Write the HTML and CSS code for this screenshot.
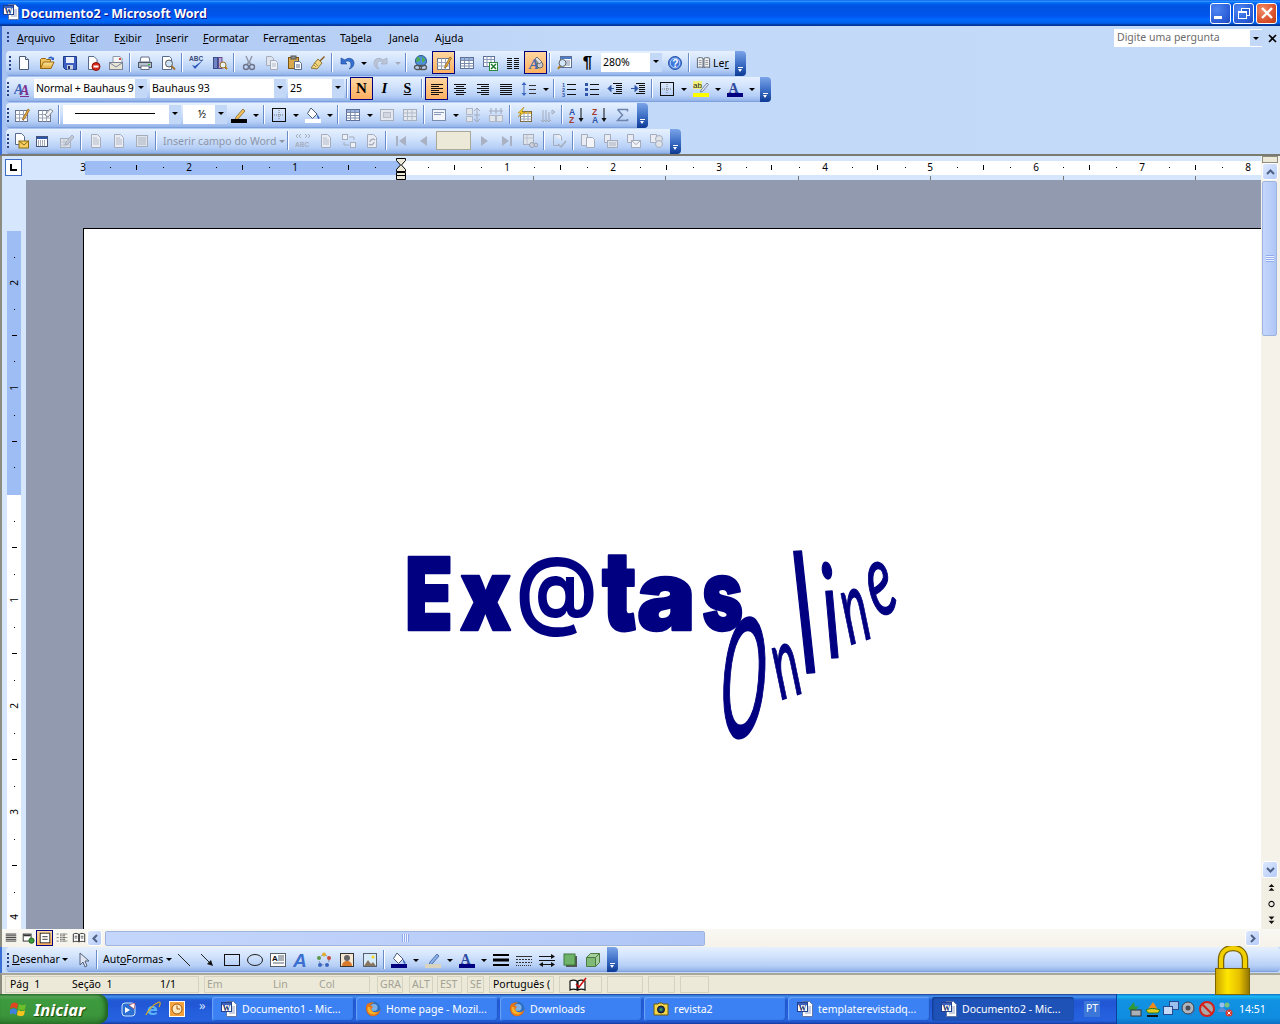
FILE: index.html
```html
<!DOCTYPE html>
<html lang="pt">
<head>
<meta charset="utf-8">
<title>Documento2 - Microsoft Word</title>
<link rel="stylesheet" href="styles.css">
</head>
<body>
<svg class="defs" width="0" height="0" aria-hidden="true">
<defs>
<linearGradient id="gold" x1="0" y1="0" x2="1" y2="0"><stop offset="0" stop-color="#c9a400"/><stop offset=".35" stop-color="#ffe600"/><stop offset=".7" stop-color="#e6c000"/><stop offset="1" stop-color="#8f7400"/></linearGradient>
<linearGradient id="fold" x1="0" y1="0" x2="0" y2="1"><stop offset="0" stop-color="#ffe9a0"/><stop offset="1" stop-color="#e0a93c"/></linearGradient>
<symbol id="new" viewBox="0 0 16 16"><path d="M3.5 1.5h6l3 3v10h-9z" fill="#fff" stroke="#4a5a78"/><path d="M9.5 1.5v3h3" fill="#dfe8f6" stroke="#4a5a78"/></symbol>
<symbol id="open" viewBox="0 0 16 16"><path d="M1.5 13.5v-9l1-1h4l1 1h4v2" fill="#f1c55f" stroke="#96660f"/><path d="M1.5 13.5l3-6.500h10.500l-3 6.500z" fill="url(#fold)" stroke="#96660f"/><path d="M9 3c2-2 4-2 5 0l1-1v3h-3l1-1c-1-1-2-1-3 0" fill="#2f62c8"/></symbol>
<symbol id="save" viewBox="0 0 16 16"><path d="M1.500 1.500h13v13h-11l-2-2z" fill="#3a5fc0" stroke="#1c3a86"/><rect x="4" y="2" width="8" height="6" fill="#e8eefb"/><rect x="5" y="10" width="6" height="4.500" fill="#c8d0e0"/><rect x="6" y="11" width="2" height="3" fill="#203060"/></symbol>
<symbol id="perm" viewBox="0 0 16 16"><path d="M3.500 1.500h5.500l3 3v10h-8.500z" fill="#fff" stroke="#59698a"/><circle cx="11" cy="11.500" r="4" fill="#d82a1c" stroke="#8e1208"/><rect x="8.500" y="10.500" width="5" height="2" fill="#fff"/></symbol>
<symbol id="mailp" viewBox="0 0 16 16"><path d="M5 1.500h7l2 2v6h-9z" fill="#f6f6f6" stroke="#8d98ad"/><rect x="1.500" y="7.500" width="13" height="7" fill="#e9e5d5" stroke="#7a8499"/><path d="M2 8l6 4 6-4" fill="none" stroke="#7a8499"/><rect x="11" y="3" width="2" height="2" fill="#d64a3c"/></symbol>
<symbol id="print" viewBox="0 0 16 16"><path d="M4 2h8l1 5H3z" fill="#fff" stroke="#636f85"/><rect x="1.500" y="7.500" width="13" height="5" fill="#b8c0cc" stroke="#4d5666"/><rect x="4" y="11" width="8" height="3.500" fill="#fff" stroke="#636f85"/><rect x="11" y="9" width="2" height="1" fill="#27c43b"/></symbol>
<symbol id="prev" viewBox="0 0 16 16"><path d="M2.500 1.500h7l2 2v11h-9z" fill="#fff" stroke="#59698a"/><circle cx="9" cy="8.500" r="3.500" fill="#cde4f8" stroke="#5a5a5a"/><path d="M11.500 11l3.500 3.500" stroke="#a0732e" stroke-width="2"/></symbol>
<symbol id="spell" viewBox="0 0 16 16"><text x="0" y="6" font-family="Liberation Sans" font-size="6.500" font-weight="700" fill="#3a4a78">ABC</text><path d="M3 10l3 4 8-9-8 6z" fill="#2b55b8"/></symbol>
<symbol id="research" viewBox="0 0 16 16"><rect x="1.500" y="2.500" width="4" height="11" fill="#6f84c4" stroke="#3b4d88"/><rect x="6.500" y="2.500" width="3.500" height="11" fill="#b9a7d9" stroke="#5d4d88"/><circle cx="11" cy="10" r="3" fill="#e8f2fb" stroke="#9b6b1d"/><path d="M13 12l2 2" stroke="#b27a1a" stroke-width="2"/></symbol>
<symbol id="cut" viewBox="0 0 16 16"><path d="M5 1l3 7 3-7M6 9l2-2 2 2" fill="none" stroke="#8f96a8" stroke-width="1.400"/><circle cx="5" cy="12" r="2.500" fill="none" stroke="#6d748a" stroke-width="1.400"/><circle cx="11" cy="12" r="2.500" fill="none" stroke="#6d748a" stroke-width="1.400"/></symbol>
<symbol id="copy" viewBox="0 0 16 16"><path d="M2.500 1.500h5l2 2v7h-7z" fill="#dfe4ec" stroke="#a5adbd"/><path d="M6.500 5.500h5l2 2v7h-7z" fill="#eef1f6" stroke="#a5adbd"/><path d="M8 9h4M8 11h4" stroke="#b5bccb"/></symbol>
<symbol id="paste" viewBox="0 0 16 16"><rect x="1.500" y="2.500" width="10" height="11" fill="#d8a84a" stroke="#7b5514"/><rect x="4" y="1" width="5" height="3" fill="#8f8f8f" stroke="#555"/><path d="M7.500 6.500h5l2 2v6h-7z" fill="#fff" stroke="#59698a"/><path d="M9 10h4M9 12h4" stroke="#59698a"/></symbol>
<symbol id="brush" viewBox="0 0 16 16"><path d="M9 6l5-5 1 1-5 5z" fill="#8a5a22"/><path d="M8 4l4 4-5 6-6-1c2-2 3-5 7-9z" fill="#efd37f" stroke="#8e7430"/><path d="M5 8l3 3M4 10l2 2" stroke="#a98e3d"/></symbol>
<symbol id="undo" viewBox="0 0 16 16"><path d="M2 3v6h6L6 7c3-2 6-1 6 3 0 2-1 3-2 4 4-1 5-4 5-6 0-5-6-6-9-3z" fill="#3570cf" stroke="#1d4797" stroke-width=".6"/></symbol>
<symbol id="redo" viewBox="0 0 16 16"><path d="M14 3v6H8l2-2C7 5 4 6 4 10c0 2 1 3 2 4-4-1-5-4-5-6 0-5 6-6 9-3z" fill="#bcc6d6" stroke="#9aa5ba" stroke-width=".6"/></symbol>
<symbol id="link" viewBox="0 0 16 16"><circle cx="8" cy="6" r="5.500" fill="#4d8fd8" stroke="#28558e"/><path d="M4 2c2 0 3 1 3 3s-3 1-4 2M9 1c0 2 3 2 3 4s-2 1-3 3" fill="#4cae4c"/><rect x="1.500" y="10.500" width="7" height="4" rx="2" fill="none" stroke="#555" stroke-width="1.300"/><rect x="6.500" y="10.500" width="7" height="4" rx="2" fill="none" stroke="#555" stroke-width="1.300"/></symbol>
<symbol id="tblp" viewBox="0 0 16 16"><rect x="1.500" y="3.500" width="12" height="11" fill="#fff" stroke="#6a7690"/><path d="M1.500 7.500h12M1.500 11h12M5.500 3.500v11M9.500 3.500v11" stroke="#9aa5ba"/><path d="M9 11l5-9 1.500 1-5 9-2 1z" fill="#f0b040" stroke="#8a5a10" stroke-width=".7"/></symbol>
<symbol id="eras" viewBox="0 0 16 16"><rect x="1.500" y="3.500" width="12" height="11" fill="#fff" stroke="#6a7690"/><path d="M1.500 7.500h12M1.500 11h12M5.500 3.500v11M9.500 3.500v11" stroke="#9aa5ba"/><path d="M8 8l5-6 3 2-5 6z" fill="#f0f0f0" stroke="#70788a" stroke-width=".8"/></symbol>
<symbol id="table" viewBox="0 0 16 16"><rect x="1.500" y="2.500" width="13" height="11" fill="#fff" stroke="#5d6f96"/><rect x="2" y="3" width="12" height="2.500" fill="#9db5e0"/><path d="M1.500 5.500h13M1.500 8.500h13M1.500 11h13M5.500 2.500v11M10 2.500v11" stroke="#7b8cad"/></symbol>
<symbol id="excel" viewBox="0 0 16 16"><rect x="1.500" y="1.500" width="11" height="10" fill="#fff" stroke="#5d6f96"/><path d="M1.500 4.500h11M1.500 7.500h11M5 1.500v10M9 1.500v10" stroke="#8a9ab8"/><rect x="7.500" y="7.500" width="8" height="8" fill="#fff" stroke="#2b8a3a"/><path d="M9 9l5 5M14 9l-5 5" stroke="#1f7a2e" stroke-width="1.500"/></symbol>
<symbol id="cols" viewBox="0 0 16 16"><path d="M2 3.500h5M9 3.500h5M2 5.500h5M9 5.500h5M2 7.500h5M9 7.500h5M2 9.500h5M9 9.500h5M2 11.500h5M9 11.500h5M2 13.500h5M9 13.500h5" stroke="#111"/></symbol>
<symbol id="draw" viewBox="0 0 16 16"><text x="1" y="14" font-family="Liberation Serif" font-size="15" font-weight="700" font-style="italic" fill="#4a6ab0">A</text><circle cx="12" cy="10" r="3" fill="#c8c8d0" stroke="#666"/><path d="M9 2l5 5-3 2-4-5z" fill="#dfdfe6" stroke="#777"/></symbol>
<symbol id="map" viewBox="0 0 16 16"><rect x="3.500" y="1.500" width="11" height="11" fill="#fff" stroke="#5d6f96"/><rect x="4" y="2" width="10" height="2" fill="#4d7cc8"/><path d="M9 6h4M9 8h4M9 10h4" stroke="#7b8cad"/><circle cx="5.500" cy="8" r="3.500" fill="#d2e8fa" stroke="#606060"/><path d="M3 11l-2 3" stroke="#b27a1a" stroke-width="2"/></symbol>
<symbol id="help" viewBox="0 0 16 16"><circle cx="8" cy="8" r="6.500" fill="#3f79dd" stroke="#2b55a8"/><circle cx="8" cy="8" r="4.800" fill="none" stroke="#b7d0f7"/><text x="5.300" y="12" font-family="Liberation Sans" font-size="10" font-weight="700" fill="#fff">?</text></symbol>
<symbol id="book" viewBox="0 0 16 16"><path d="M1.500 3.500c2-1 4-1 6 0v10c-2-1-4-1-6 0zM14.500 3.500c-2-1-4-1-6 0v10c2-1 4-1 6 0z" fill="#f2f2f0" stroke="#59606e"/><path d="M3 6h3M3 8h3M3 10h3M10 6h3M10 8h3M10 10h3" stroke="#8c93a0"/></symbol>
<symbol id="style" viewBox="0 0 16 16"><text x="0" y="13" font-family="Liberation Serif" font-size="14" font-weight="700" font-style="italic" fill="#3c61b5">A</text><text x="6" y="14" font-family="Liberation Serif" font-size="14" font-weight="700" font-style="italic" fill="#7e2f8e">A</text><path d="M6 15.500h9" stroke="#7e2f8e"/></symbol>
<symbol id="al" viewBox="0 0 16 16"><path d="M2 3.500h12M2 5.500h8M2 7.500h12M2 9.500h8M2 11.500h12M2 13.500h8" stroke="#111"/></symbol>
<symbol id="ac" viewBox="0 0 16 16"><path d="M2 3.500h12M4 5.500h8M2 7.500h12M4 9.500h8M2 11.500h12M4 13.500h8" stroke="#111"/></symbol>
<symbol id="ar" viewBox="0 0 16 16"><path d="M2 3.500h12M6 5.500h8M2 7.500h12M6 9.500h8M2 11.500h12M6 13.500h8" stroke="#111"/></symbol>
<symbol id="aj" viewBox="0 0 16 16"><path d="M2 3.500h12M2 5.500h12M2 7.500h12M2 9.500h12M2 11.500h12M2 13.500h12" stroke="#111"/></symbol>
<symbol id="lsp" viewBox="0 0 16 16"><path d="M8 4.500h7M8 8.500h7M8 12.500h7" stroke="#333"/><path d="M3 1l2.500 3h-5zM3 15L.5 12h5z" fill="#3a66bf"/><path d="M3 4v8" stroke="#3a66bf"/></symbol>
<symbol id="num" viewBox="0 0 16 16"><text x="1" y="6" font-size="5.500" font-family="Liberation Sans" font-weight="700" fill="#2e55a8">1</text><text x="1" y="11" font-size="5.500" font-family="Liberation Sans" font-weight="700" fill="#2e55a8">2</text><text x="1" y="16" font-size="5.500" font-family="Liberation Sans" font-weight="700" fill="#2e55a8">3</text><path d="M6 3.500h9M6 8.500h9M6 13.500h9" stroke="#111"/></symbol>
<symbol id="bul" viewBox="0 0 16 16"><rect x="1" y="2" width="3" height="3" fill="#2e55a8"/><rect x="1" y="7" width="3" height="3" fill="#2e55a8"/><rect x="1" y="12" width="3" height="3" fill="#2e55a8"/><path d="M6 3.500h9M6 8.500h9M6 13.500h9" stroke="#111"/></symbol>
<symbol id="outd" viewBox="0 0 16 16"><path d="M6 2.500h9M9 4.500h6M9 6.500h6M9 8.500h6M9 10.500h6M6 12.500h9" stroke="#111"/><path d="M7 7.500H3M1 7.500l3-3v6z" fill="#2e55a8" stroke="#2e55a8"/></symbol>
<symbol id="ind" viewBox="0 0 16 16"><path d="M6 2.500h9M9 4.500h6M9 6.500h6M9 8.500h6M9 10.500h6M6 12.500h9" stroke="#111"/><path d="M1 7.500h4M8 7.500l-3-3v6z" fill="#2e55a8" stroke="#2e55a8"/></symbol>
<symbol id="bord" viewBox="0 0 16 16"><rect x="1.500" y="1.500" width="13" height="13" fill="none" stroke="#111"/><path d="M8 3v10M3 8h10" stroke="#777" stroke-dasharray="1 1"/></symbol>
<symbol id="high" viewBox="0 0 16 16"><rect x="0" y="0" width="9" height="8" fill="#f3f27a"/><text x="0" y="7" font-family="Liberation Sans" font-size="8" fill="#222">ab</text><path d="M8 9l6-7 1.500 1.500-6 7-2 .5z" fill="#dfe6f2" stroke="#5b6b88" stroke-width=".8"/><rect x="0" y="12" width="16" height="4" fill="#ff0"/></symbol>
<symbol id="fcol" viewBox="0 0 16 16"><text x="1.500" y="11.500" font-family="Liberation Serif" font-size="14" font-weight="700" fill="#2e4a9e">A</text><rect x="0" y="12" width="16" height="4" fill="#000080"/></symbol>
<symbol id="pen" viewBox="0 0 16 16"><path d="M5 10l7-8 2 2-7 8-3 1z" fill="#f4c15c" stroke="#7e6430" stroke-width=".8"/><rect x="0" y="12" width="16" height="4" fill="#000"/></symbol>
<symbol id="penb" viewBox="0 0 16 16"><path d="M5 10l7-8 2 2-7 8-3 1z" fill="#8bb0e8" stroke="#3a5f9e" stroke-width=".8"/><rect x="0" y="12" width="16" height="4" fill="#d8d4c0"/></symbol>
<symbol id="fill" viewBox="0 0 16 16"><path d="M6 1l6 6-4.500 4.500-5-5z" fill="#fff" stroke="#4a5a78"/><path d="M12 7c1 2 3 3 2.500 4.500S11.500 11 12 7z" fill="#3a66bf"/><rect x="0" y="12" width="16" height="4" fill="#fff"/></symbol>
<symbol id="filln" viewBox="0 0 16 16"><path d="M6 1l6 6-4.500 4.500-5-5z" fill="#fff" stroke="#4a5a78"/><path d="M12 7c1 2 3 3 2.500 4.500S11.500 11 12 7z" fill="#3a66bf"/><rect x="0" y="12" width="16" height="4" fill="#000080"/></symbol>
<symbol id="merge" viewBox="0 0 16 16"><rect x="1.500" y="2.500" width="13" height="11" fill="#e4e8ef" stroke="#a7afbf"/><rect x="4.500" y="5.500" width="7" height="5" fill="#d2d7e0" stroke="#b6bcc9"/></symbol>
<symbol id="split" viewBox="0 0 16 16"><rect x="1.500" y="2.500" width="13" height="11" fill="#e4e8ef" stroke="#a7afbf"/><path d="M1.500 6h13M1.500 9.500h13M5.500 2.500v11M10 2.500v11" stroke="#b3bac8"/></symbol>
<symbol id="calign" viewBox="0 0 16 16"><rect x="1.500" y="2.500" width="13" height="11" fill="#f2f5fa" stroke="#7b8cad"/><path d="M3 5.500h10M3 7.500h7" stroke="#8a9ab8"/></symbol>
<symbol id="drow" viewBox="0 0 16 16"><rect x="1.500" y="1.500" width="6" height="6" fill="#e1e5ec" stroke="#b0b7c6"/><rect x="1.500" y="9.500" width="6" height="5" fill="#e1e5ec" stroke="#b0b7c6"/><path d="M12 1v14M9 4l3-3 3 3M9 12l3 3 3-3M9 8h6" fill="none" stroke="#a2aabb"/></symbol>
<symbol id="dcol" viewBox="0 0 16 16"><rect x="1.500" y="8.500" width="6" height="6" fill="#e1e5ec" stroke="#b0b7c6"/><rect x="8.500" y="8.500" width="6" height="6" fill="#e1e5ec" stroke="#b0b7c6"/><path d="M1 4h14M3 1v6M8 1v6M13 1v6" fill="none" stroke="#a2aabb"/></symbol>
<symbol id="auto" viewBox="0 0 16 16"><rect x="3.500" y="4.500" width="11" height="10" fill="#fff" stroke="#7c6a3a"/><rect x="4" y="5" width="10" height="2" fill="#e9b94a"/><path d="M3.500 9.500h11M3.500 12h11M7 4.500v10M11 4.500v10" stroke="#9aa5ba"/><path d="M7 0L1 6h3l-3 4 7-5H5z" fill="#f6cc2a" stroke="#a2781a" stroke-width=".5"/></symbol>
<symbol id="tdir" viewBox="0 0 16 16"><path d="M3 3v11M6 3v11M9 5v9M12 3l3 2-3 2zM1 13l2 2 2-2M4 13l2 2 2-2M7 13l2 2 2-2" fill="none" stroke="#a2aabb"/></symbol>
<symbol id="az" viewBox="0 0 16 16"><text x="0" y="7.500" font-family="Liberation Sans" font-size="8.500" font-weight="700" fill="#2e55a8">A</text><text x="0" y="15.500" font-family="Liberation Sans" font-size="8.500" font-weight="700" fill="#a83a2e">Z</text><path d="M12 1v12" stroke="#111"/><path d="M9.500 11h5L12 15z" fill="#111"/></symbol>
<symbol id="za" viewBox="0 0 16 16"><text x="0" y="7.500" font-family="Liberation Sans" font-size="8.500" font-weight="700" fill="#a83a2e">Z</text><text x="0" y="15.500" font-family="Liberation Sans" font-size="8.500" font-weight="700" fill="#2e55a8">A</text><path d="M12 1v12" stroke="#111"/><path d="M9.500 11h5L12 15z" fill="#111"/></symbol>
<symbol id="sum" viewBox="0 0 16 16"><path d="M2.500 2.500h10v2M12.500 12v1.500h-10l5-5.500-5-5.500" fill="none" stroke="#6d84ad" stroke-width="1.500"/></symbol>
<symbol id="mmain" viewBox="0 0 16 16"><path d="M2.500 .5h6l3 3v8h-9z" fill="#fff" stroke="#59698a"/><rect x="6" y="8" width="9.500" height="7" fill="#f6cf62" stroke="#8b6a14"/><path d="M6 8l5 4 4.500-4" fill="none" stroke="#8b6a14"/></symbol>
<symbol id="cal" viewBox="0 0 16 16"><rect x="2.500" y="3.500" width="11" height="10" fill="#fff" stroke="#46567a"/><rect x="3" y="4" width="10" height="2" fill="#2e55a8"/><path d="M4 8h8M4 10h8M4 12h8" stroke="#46567a" stroke-dasharray="1 1"/></symbol>
<symbol id="medit" viewBox="0 0 16 16"><rect x="1.500" y="5.500" width="10" height="9" fill="#dfe3ea" stroke="#a5adbd"/><path d="M1.500 9h10M1.500 12h10M5 5.500v9" stroke="#bcc3d0"/><path d="M7 9l6-7 2 2-6 7-3 1z" fill="#c5cbd6" stroke="#9aa3b4" stroke-width=".8"/></symbol>
<symbol id="gdoc" viewBox="0 0 16 16"><path d="M3.500 1.500h6l3 3v10h-9z" fill="#e9ecf2" stroke="#a5adbd"/><path d="M5 5h4M5 7h6M5 9h6M5 11h6" stroke="#b5bccb"/></symbol>
<symbol id="gdoc2" viewBox="0 0 16 16"><rect x="2.500" y="2.500" width="11" height="11" fill="#dfe3ea" stroke="#a5adbd"/><path d="M4 5h8M4 7h8M4 9h8M4 11h8" stroke="#aeb5c4"/></symbol>
<symbol id="abc" viewBox="0 0 16 16"><path d="M3 1L1 3l2 2M6 1L4 3l2 2M10 1l2 2-2 2M13 1l2 2-2 2" fill="none" stroke="#a5adbd"/><text x="0" y="14" font-size="6.500" font-weight="700" font-family="Liberation Sans" fill="#a5adbd">ABC</text></symbol>
<symbol id="rules" viewBox="0 0 16 16"><rect x="1.500" y="1.500" width="5" height="5" fill="#eef1f6" stroke="#a5adbd"/><rect x="9.500" y="9.500" width="5" height="5" fill="#eef1f6" stroke="#a5adbd"/><path d="M8 4h5v3M8 12H3V9" fill="none" stroke="#a5adbd"/></symbol>
<symbol id="upd" viewBox="0 0 16 16"><path d="M3.500 1.500h6l3 3v10h-9z" fill="#e9ecf2" stroke="#a5adbd"/><path d="M6 9a3 3 0 015-2M10 9a3 3 0 01-5 2" fill="none" stroke="#a0a8b8" stroke-width="1.300"/></symbol>
<symbol id="first" viewBox="0 0 16 16"><rect x="3" y="3" width="2" height="10" fill="#a9b1c2"/><path d="M13 3v10L6 8z" fill="#a9b1c2"/></symbol>
<symbol id="prevr" viewBox="0 0 16 16"><path d="M11 3v10L4 8z" fill="#a9b1c2"/></symbol>
<symbol id="nextr" viewBox="0 0 16 16"><path d="M5 3v10l7-5z" fill="#a9b1c2"/></symbol>
<symbol id="last" viewBox="0 0 16 16"><path d="M3 3v10l7-5z" fill="#a9b1c2"/><rect x="11" y="3" width="2" height="10" fill="#a9b1c2"/></symbol>
<symbol id="find" viewBox="0 0 16 16"><rect x="1.500" y="1.500" width="10" height="10" fill="#e1e5ec" stroke="#a5adbd"/><path d="M1.500 5h10M5 1.500v10" stroke="#bcc3d0"/><circle cx="10" cy="12" r="2.500" fill="#cbd1dc" stroke="#99a1b2"/><circle cx="14" cy="12" r="1.800" fill="#cbd1dc" stroke="#99a1b2"/></symbol>
<symbol id="chk" viewBox="0 0 16 16"><path d="M2.500 1.500h6l2 2v4" fill="#e9ecf2" stroke="#a5adbd"/><path d="M2.500 1.500v11h5" fill="none" stroke="#a5adbd"/><path d="M7 11l3 3 5-6" fill="none" stroke="#a5adbd" stroke-width="1.500"/></symbol>
<symbol id="m1" viewBox="0 0 16 16"><path d="M1.500 1.500h6v11h-6z" fill="#e9ecf2" stroke="#a5adbd"/><path d="M6.500 4.500h6l2 2v8h-8z" fill="#f2f4f8" stroke="#a5adbd"/></symbol>
<symbol id="m2" viewBox="0 0 16 16"><path d="M1.500 1.500h6v8h-6z" fill="#e9ecf2" stroke="#a5adbd"/><rect x="4.500" y="7.500" width="10" height="7" fill="#dfe3ea" stroke="#a5adbd"/><path d="M6 10h7M6 12h7" stroke="#aeb5c4"/></symbol>
<symbol id="m3" viewBox="0 0 16 16"><path d="M1.500 1.500h6v8h-6z" fill="#e9ecf2" stroke="#a5adbd"/><rect x="5.500" y="7.500" width="9" height="7" fill="#f2f4f8" stroke="#a5adbd"/><path d="M5.500 7.500l4.500 4 4.500-4" fill="none" stroke="#a5adbd"/></symbol>
<symbol id="m4" viewBox="0 0 16 16"><path d="M1.500 1.500h6v8h-6z" fill="#e9ecf2" stroke="#a5adbd"/><circle cx="10" cy="6" r="3.500" fill="#dfe3ea" stroke="#a5adbd"/><circle cx="10" cy="11" r="3.500" fill="#dfe3ea" stroke="#a5adbd"/></symbol>
<symbol id="cursor" viewBox="0 0 16 16"><path d="M5 1v12l3-3 2 5 2-1-2-5h4z" fill="#dfe6f2" stroke="#54607a"/></symbol>
<symbol id="line" viewBox="0 0 16 16"><path d="M2 2l12 12" stroke="#222"/></symbol>
<symbol id="arrow" viewBox="0 0 16 16"><path d="M2 2l10 10" stroke="#222"/><path d="M14 14l-6-2 4-4z" fill="#111"/></symbol>
<symbol id="rect" viewBox="0 0 16 16"><rect x=".5" y="2.500" width="15" height="11" fill="none" stroke="#111"/></symbol>
<symbol id="oval" viewBox="0 0 16 16"><ellipse cx="8" cy="8" rx="7.500" ry="5.500" fill="none" stroke="#222"/></symbol>
<symbol id="tbox" viewBox="0 0 16 16"><rect x=".5" y="1.500" width="15" height="13" fill="#fff" stroke="#59606e"/><text x="2" y="8.500" font-size="8" font-family="Liberation Sans" font-weight="700" fill="#111">A</text><path d="M8 4h6M8 6h6M8 8h6M3 11h11" stroke="#59606e"/></symbol>
<symbol id="wart" viewBox="0 0 16 16"><text x="0" y="15" font-family="Liberation Sans" font-size="19" font-weight="700" font-style="italic" fill="#3b6fd0">A</text></symbol>
<symbol id="diag" viewBox="0 0 16 16"><circle cx="8" cy="8" r="5" fill="none" stroke="#7a8499" stroke-dasharray="2 2"/><circle cx="8" cy="2.500" r="2" fill="#e0b030"/><circle cx="13" cy="6" r="2" fill="#c64a3a"/><circle cx="11" cy="13" r="2" fill="#3a66bf"/><circle cx="4" cy="13" r="2" fill="#3a66bf"/><circle cx="3" cy="6" r="2" fill="#5a9a4a"/></symbol>
<symbol id="clip" viewBox="0 0 16 16"><rect x="1.500" y="1.500" width="13" height="13" fill="#f4e8d0" stroke="#333"/><circle cx="8" cy="6" r="3" fill="#666"/><path d="M3 14c0-4 3-5 5-5s5 1 5 5z" fill="#d9792c"/></symbol>
<symbol id="pict" viewBox="0 0 16 16"><rect x="1.500" y="1.500" width="13" height="13" fill="#d7ecfa" stroke="#59606e"/><path d="M2 14l4-6 3 4 2-2 3 4z" fill="#8a7560"/><circle cx="11" cy="5" r="1.500" fill="#f5d020"/></symbol>
<symbol id="lsty" viewBox="0 0 16 16"><path d="M0 3h16" stroke="#000" stroke-width="2"/><path d="M0 8h16" stroke="#000" stroke-width="3"/><path d="M0 13h16" stroke="#000" stroke-width="2"/></symbol>
<symbol id="dash" viewBox="0 0 16 16"><path d="M0 4.500h16" stroke="#333"/><path d="M0 7.500h16M0 10.500h16" stroke="#333" stroke-dasharray="2 1"/><path d="M0 13.500h16" stroke="#333" stroke-dasharray="1 1"/></symbol>
<symbol id="arrs" viewBox="0 0 16 16"><path d="M0 4.500h13" stroke="#111"/><path d="M16 4.500l-4-2.500v5z" fill="#111"/><path d="M0 8.500h16" stroke="#111"/><path d="M3 12.500h10" stroke="#111"/><path d="M0 12.500l4-2.500v5zM16 12.500l-4-2.500v5z" fill="#111"/></symbol>
<symbol id="shad" viewBox="0 0 16 16"><rect x="4" y="4" width="11" height="11" fill="#555"/><rect x="2" y="2" width="11" height="11" fill="#6fb36a" stroke="#3d7a38"/></symbol>
<symbol id="d3" viewBox="0 0 16 16"><path d="M1.500 5.500l4-4h9v9l-4 4h-9z" fill="#a4d09c" stroke="#4c7a45"/><path d="M1.500 5.500h9v9M10.500 5.500l4-4" fill="none" stroke="#4c7a45"/><rect x="2" y="6" width="8" height="8" fill="#7fbb76"/></symbol>
<symbol id="vn" viewBox="0 0 16 16"><path d="M2 3.500h12M2 5.500h12M2 7.500h12M2 9.500h12M2 11.500h12" stroke="#222"/></symbol>
<symbol id="vw" viewBox="0 0 16 16"><rect x="2.500" y="3.500" width="9" height="8" fill="#fff" stroke="#222"/><rect x="3" y="4" width="8" height="2" fill="#333"/><circle cx="12" cy="11" r="3" fill="#3c9a3c" stroke="#1d5e1d"/></symbol>
<symbol id="vp" viewBox="0 0 16 16"><rect x="2.500" y="2.500" width="11" height="11" fill="#fff" stroke="#222"/><path d="M5 6.500h6M5 9.500h6" stroke="#222"/></symbol>
<symbol id="vo" viewBox="0 0 16 16"><path d="M2 3.500h2M6 3.500h8M2 7.500h2M6 7.500h8M2 11.500h2M6 11.500h8M6 5.500h6M6 9.500h6" stroke="#222" stroke-dasharray="1 .5"/></symbol>
<symbol id="vr" viewBox="0 0 16 16"><path d="M1.500 3.500c2-1 4-1 6 0v9c-2-1-4-1-6 0zM14.500 3.500c-2-1-4-1-6 0v9c2-1 4-1 6 0z" fill="#fff" stroke="#222"/><path d="M3 6h3M10 6h3M3 8h3M10 8h3" stroke="#444"/></symbol>
<symbol id="word" viewBox="0 0 16 16"><path d="M5.500 .5h7l3 3v12h-10z" fill="#fff" stroke="#6276a5"/><path d="M8 6h6M8 8h6M8 10h6M8 12h6" stroke="#8fa0c4"/><rect x=".5" y="1.500" width="10" height="9" fill="#fff" stroke="#23408e"/><rect x="1" y="2" width="9" height="2" fill="#3c62bd"/><text x="1.800" y="9.700" font-family="Liberation Serif" font-size="7.500" font-weight="700" fill="#152a6b">W</text></symbol>
<symbol id="fox" viewBox="0 0 16 16"><circle cx="8" cy="8" r="7.500" fill="#2b6fc0"/><circle cx="9" cy="6.500" r="3.500" fill="#7cb2e8"/><path d="M2 3c-2 4-1 10 4 12 5 1 9-2 9.500-7-1 2-2 3-4 3-3 1-5-1-5-3 0-1 1-2 2-2-2-1-3-1-3-2 1-1 2-2 4-2-3-1-5 0-7.500 1z" fill="#e8741a"/><path d="M3 6c-1 3 0 6 3 7 3 1 5 0 7-2-3 1-6 0-7-2-1-1-1-2-1-3z" fill="#f6b32a"/></symbol>
<symbol id="cam" viewBox="0 0 16 16"><path d="M1 3h4l1-1h3l1 1h5v11H1z" fill="#f3d44a" stroke="#6a5a10"/><circle cx="8" cy="8.500" r="3.500" fill="#1c3f75" stroke="#111"/><circle cx="8" cy="8.500" r="1.500" fill="#3a9a50"/></symbol>
<symbol id="qdesk" viewBox="0 0 16 16"><rect x="1" y="2" width="13" height="13" rx="3" fill="#2c6fd2" stroke="#cfe3fb"/><path d="M4 6l5 3-5 3z" fill="#fff"/><path d="M8 4l6-2-1 6z" fill="#fff" stroke="#c8292b" stroke-width=".5"/></symbol>
<symbol id="ie" viewBox="0 0 16 16"><text x="2" y="14" font-family="DejaVu Sans" font-size="16" font-weight="700" fill="#5ab4f5">e</text><path d="M1 14C3 9 9 3 14 1c2 0 1 3 0 5" fill="none" stroke="#e3a916" stroke-width="1.200"/></symbol>
<symbol id="clock" viewBox="0 0 16 16"><rect x=".5" y=".5" width="15" height="15" fill="#f4a23c" stroke="#fff"/><circle cx="8" cy="8" r="5" fill="#fde9c2" stroke="#a5560b"/><path d="M8 4.500V8h3" fill="none" stroke="#a5560b"/></symbol>
<symbol id="t1" viewBox="0 0 16 16"><path d="M1 8l6-7 1 5 4-1-5 6z" fill="#2f9a35"/><rect x="4" y="9" width="10" height="6" fill="#aab0b8" stroke="#333"/></symbol>
<symbol id="t2" viewBox="0 0 16 16"><path d="M8 1c2 3 4 5 5 9H2c1-3 3-5 6-9z" fill="#f08a1c"/><path d="M1 9c4-2 8-2 14 0l-2 3H3z" fill="#e0cc20" stroke="#1c7a2a"/><path d="M2 15h11" stroke="#111" stroke-width="2"/></symbol>
<symbol id="t3" viewBox="0 0 16 16"><rect x="6.500" y=".5" width="9" height="8" fill="#9cc0ee" stroke="#254a8e"/><rect x=".5" y="5.500" width="9" height="8" fill="#c4daf6" stroke="#254a8e"/></symbol>
<symbol id="t4" viewBox="0 0 16 16"><circle cx="7" cy="7" r="6" fill="#b0b4bc" stroke="#3a3e48"/><circle cx="7" cy="7" r="2.500" fill="#4a4e58"/><path d="M9 15l5-6" stroke="#4a6ab8"/></symbol>
<symbol id="t5" viewBox="0 0 16 16"><circle cx="8" cy="8" r="7" fill="#a9a9a9"/><circle cx="8" cy="8" r="7" fill="none" stroke="#d8201a" stroke-width="2"/><path d="M3 3l10 10" stroke="#d8201a" stroke-width="2"/></symbol>
<symbol id="t6" viewBox="0 0 16 16"><circle cx="5" cy="4" r="2.500" fill="#9cc0ee"/><path d="M1 11c0-3 2-4 4-4s4 1 4 4z" fill="#5e8cd4"/><circle cx="10" cy="4" r="2.500" fill="#7cc07c"/><circle cx="12" cy="12" r="3.500" fill="#d83a30"/><path d="M10.500 10.500l3 3M13.500 10.500l-3 3" stroke="#fff"/></symbol>
<symbol id="winlogo" viewBox="0 0 18 18"><path d="M1 4c3-2 5-2 7 0l-1 5c-2-2-4-2-7 0z" fill="#e0451f"/><path d="M9 4c2 1 4 2 7 0l-1 5c-3 2-5 1-7 0z" fill="#6cbf2b"/><path d="M0 10c3-2 5-2 7 0l-1 5c-2-2-4-2-7 0z" fill="#3f7fe0"/><path d="M8 10c2 1 4 2 7 0l-1 5c-3 2-5 1-7 0z" fill="#f5c41d"/></symbol>
</defs>
</svg>

<div class="app">
  <header class="title">
    <svg class="title-ico"><use href="#word"/></svg>
    <span class="title-text">Documento2 - Microsoft Word</span>
    <span class="wbtn wb-blue"><span class="g-min"></span></span>
    <span class="wbtn wb-blue"><span class="g-max"></span></span>
    <span class="wbtn wb-red"><svg class="g-x" viewBox="0 0 14 14"><path d="M2 2l10 10M12 2L2 12" stroke="#fff" stroke-width="2.400"/></svg></span>
  </header>

  <section class="dock">
    <div class="menu">
      <span class="mgrip"></span>
      <nav class="menu-items">
        <span><u>A</u>rquivo</span><span><u>E</u>ditar</span><span>E<u>x</u>ibir</span><span><u>I</u>nserir</span><span><u>F</u>ormatar</span><span>Ferra<u>m</u>entas</span><span>Ta<u>b</u>ela</span><span><u>J</u>anela</span><span>Aj<u>u</u>da</span>
      </nav>
      <div class="ask"><span class="ask-t">Digite uma pergunta</span><span class="cdrop"></span></div>
      <svg class="mclose" viewBox="0 0 9 9"><path d="M1 1l7 7M8 1L1 8" stroke="#000" stroke-width="1.600"/></svg>
    </div>

    <div class="tb">
      <span class="grip g1"></span>
      <span class="b"><svg><use href="#new"/></svg></span><span class="b"><svg><use href="#open"/></svg></span><span class="b"><svg><use href="#save"/></svg></span><span class="b"><svg><use href="#perm"/></svg></span><span class="b"><svg><use href="#mailp"/></svg></span><i class="sep"></i>
      <span class="b"><svg><use href="#print"/></svg></span><span class="b"><svg><use href="#prev"/></svg></span><i class="sep"></i>
      <span class="b"><svg><use href="#spell"/></svg></span><span class="b"><svg><use href="#research"/></svg></span><i class="sep"></i>
      <span class="b"><svg><use href="#cut"/></svg></span><span class="b"><svg><use href="#copy"/></svg></span><span class="b"><svg><use href="#paste"/></svg></span><span class="b"><svg><use href="#brush"/></svg></span><i class="sep"></i>
      <span class="b"><svg><use href="#undo"/></svg></span><span class="dd"></span><span class="b"><svg><use href="#redo"/></svg></span><span class="dd off"></span><i class="sep"></i>
      <span class="b"><svg><use href="#link"/></svg></span><span class="b on"><svg><use href="#tblp"/></svg></span><span class="b"><svg><use href="#table"/></svg></span><span class="b"><svg><use href="#excel"/></svg></span><span class="b"><svg><use href="#cols"/></svg></span><span class="b on"><svg><use href="#draw"/></svg></span><i class="sep"></i>
      <span class="b"><svg><use href="#map"/></svg></span><span class="b txt-b">¶</span>
      <span class="combo c-zoom"><span>280%</span><span class="cdrop"></span></span>
      <span class="b"><svg><use href="#help"/></svg></span><i class="sep"></i>
      <span class="ler"><svg><use href="#book"/></svg><span>Le<u>r</u></span></span>
      <span class="chev"></span>
    </div>

    <div class="tb">
      <span class="grip"></span>
      <span class="b"><svg><use href="#style"/></svg></span>
      <span class="combo c-style"><span class="tight">Normal + Bauhaus 9</span><span class="cdrop"></span></span>
      <span class="combo c-font"><span>Bauhaus 93</span><span class="cdrop"></span></span>
      <span class="combo c-size"><span>25</span><span class="cdrop"></span></span><i class="sep"></i>
      <span class="b on let-n">N</span><span class="b let-i">I</span><span class="b let-s">S</span><i class="sep"></i>
      <span class="b on"><svg><use href="#al"/></svg></span><span class="b"><svg><use href="#ac"/></svg></span><span class="b"><svg><use href="#ar"/></svg></span><span class="b"><svg><use href="#aj"/></svg></span><span class="b"><svg><use href="#lsp"/></svg></span><span class="dd"></span><i class="sep"></i>
      <span class="b"><svg><use href="#num"/></svg></span><span class="b"><svg><use href="#bul"/></svg></span><span class="b"><svg><use href="#outd"/></svg></span><span class="b"><svg><use href="#ind"/></svg></span><i class="sep"></i>
      <span class="b"><svg><use href="#bord"/></svg></span><span class="dd"></span><span class="b"><svg><use href="#high"/></svg></span><span class="dd"></span><span class="b"><svg><use href="#fcol"/></svg></span><span class="dd"></span>
      <span class="chev ch2"></span>
    </div>

    <div class="tb">
      <span class="grip"></span>
      <span class="b"><svg><use href="#tblp"/></svg></span><span class="b"><svg><use href="#eras"/></svg></span><i class="sep"></i>
      <span class="combo c-line"><span class="lineprev"></span><span class="cdrop"></span></span>
      <span class="combo c-wt"><span class="wt">½</span><span class="cdrop"></span></span>
      <span class="b"><svg><use href="#pen"/></svg></span><span class="dd"></span><i class="sep"></i>
      <span class="b"><svg><use href="#bord"/></svg></span><span class="dd"></span><span class="b"><svg><use href="#fill"/></svg></span><span class="dd"></span><i class="sep"></i>
      <span class="b"><svg><use href="#table"/></svg></span><span class="dd"></span><span class="b"><svg><use href="#merge"/></svg></span><span class="b"><svg><use href="#split"/></svg></span><i class="sep"></i>
      <span class="b"><svg><use href="#calign"/></svg></span><span class="dd"></span><span class="b"><svg><use href="#drow"/></svg></span><span class="b"><svg><use href="#dcol"/></svg></span><i class="sep"></i>
      <span class="b"><svg><use href="#auto"/></svg></span><span class="b"><svg><use href="#tdir"/></svg></span><i class="sep"></i>
      <span class="b"><svg><use href="#az"/></svg></span><span class="b"><svg><use href="#za"/></svg></span><span class="b"><svg><use href="#sum"/></svg></span>
      <span class="chev ch3"></span>
    </div>

    <div class="tb">
      <span class="grip"></span>
      <span class="b b21"><svg><use href="#mmain"/></svg></span><span class="b b21"><svg><use href="#cal"/></svg></span><span class="b b-m3"><svg><use href="#medit"/></svg></span><i class="sep"></i>
      <span class="b"><svg><use href="#gdoc"/></svg></span><span class="b"><svg><use href="#gdoc"/></svg></span><span class="b"><svg><use href="#gdoc2"/></svg></span><i class="sep"></i>
      <span class="campo">Inserir campo do Word <b class="mini-arrow"></b></span><i class="sep"></i>
      <span class="b"><svg><use href="#abc"/></svg></span><span class="b"><svg><use href="#gdoc"/></svg></span><span class="b"><svg><use href="#rules"/></svg></span><span class="b"><svg><use href="#upd"/></svg></span><i class="sep"></i>
      <span class="b"><svg><use href="#first"/></svg></span><span class="b"><svg><use href="#prevr"/></svg></span>
      <span class="recbox"></span>
      <span class="b"><svg><use href="#nextr"/></svg></span><span class="b"><svg><use href="#last"/></svg></span><span class="b"><svg><use href="#find"/></svg></span><i class="sep"></i>
      <span class="b"><svg><use href="#chk"/></svg></span><i class="sep"></i>
      <span class="b"><svg><use href="#m1"/></svg></span><span class="b"><svg><use href="#m2"/></svg></span><span class="b"><svg><use href="#m3"/></svg></span><span class="b"><svg><use href="#m4"/></svg></span>
      <span class="chev ch4"></span>
    </div>
  </section>

  <main class="main">
    <div class="docarea">
      <svg class="hruler" viewBox="2 0 1259 24">
        <rect class="rbg" width="1262" height="24"/>
        <rect class="rwhite" x="85" y="5" width="1176" height="14"/>
        <rect class="rhi" x="85" y="5" width="316" height="14"/>
        <path class="rdots" d="M110 11h1v1h-1zM163 11h1v1h-1zM216 11h1v1h-1zM269 11h1v1h-1zM322 11h1v1h-1zM375 11h1v1h-1zM428 11h1v1h-1zM481 11h1v1h-1zM534 11h1v1h-1zM587 11h1v1h-1zM640 11h1v1h-1zM693 11h1v1h-1zM746 11h1v1h-1zM799 11h1v1h-1zM852 11h1v1h-1zM905 11h1v1h-1zM957 11h1v1h-1zM1010 11h1v1h-1zM1063 11h1v1h-1zM1116 11h1v1h-1zM1169 11h1v1h-1zM1222 11h1v1h-1z"/>
        <path class="rticks" d="M136.500 9v5M242.500 9v5M348.500 9v5M454.500 9v5M560.500 9v5M666.500 9v5M771.500 9v5M877.500 9v5M983.500 9v5M1089.500 9v5M1195.500 9v5"/>
        <path class="rcols" d="M533.500 20v4M665.500 20v4M798.500 20v4M930.500 20v4M1063.500 20v4M1195.500 20v4"/>
        <g class="rnum"><text x="83" y="15">3</text><text x="189" y="15">2</text><text x="295" y="15">1</text><text x="507" y="15">1</text><text x="613" y="15">2</text><text x="719" y="15">3</text><text x="825" y="15">4</text><text x="930" y="15">5</text><text x="1036" y="15">6</text><text x="1142" y="15">7</text><text x="1248" y="15">8</text></g>
        <path class="rmark" d="M396.500 2.500h9v2l-4 4.500 4 4.500v2h-9v-2l4-4.500-4-4.500z"/>
        <path class="rmark" d="M396.500 16.500h9v7h-9z"/>
        <path d="M396.500 19.500h9" stroke="#000"/>
      </svg>
      <span class="tabbox"><svg viewBox="0 0 7 7"><path d="M1 0v6h6" fill="none" stroke="#000" stroke-width="2"/></svg></span>
      <div class="workrow">
        <svg class="vruler" viewBox="0 0 24 749">
          <rect class="rbg" width="24" height="749"/>
          <rect class="rwhite" x="5" y="51" width="14" height="698"/>
          <rect class="rhi" x="5" y="51" width="14" height="264"/>
          <path class="rdots" d="M12 77h1v1h-1zM12 129h1v1h-1zM12 181h1v1h-1zM12 235h1v1h-1zM12 287h1v1h-1zM12 341h1v1h-1zM12 394h1v1h-1zM12 447h1v1h-1zM12 500h1v1h-1zM12 553h1v1h-1zM12 606h1v1h-1zM12 659h1v1h-1zM12 712h1v1h-1z"/>
          <path class="rticks" d="M10 155.500h5M10 261.500h5M10 367.500h5M10 473.500h5M10 579.500h5M10 685.500h5"/>
          <g class="rnum">
            <text transform="translate(16 103) rotate(-90)">2</text>
            <text transform="translate(16 208) rotate(-90)">1</text>
            <text transform="translate(16 420) rotate(-90)">1</text>
            <text transform="translate(16 526) rotate(-90)">2</text>
            <text transform="translate(16 632) rotate(-90)">3</text>
            <text transform="translate(16 737) rotate(-90)">4</text>
          </g>
        </svg>
        <div class="canvas">
          <div class="page">
            <svg class="logo" viewBox="0 0 520 210" role="img" aria-label="Ex@tas Online">
              <g class="lg">
                <text transform="translate(15 90) scale(.78 1.01)">E</text>
                <text transform="translate(70 90) scale(.84 .98)">x</text>
                <text class="lg-at" transform="translate(126 79) scale(.8 .86)">@</text>
                <text transform="translate(212 90) scale(.86 1.1)">t</text>
                <text transform="translate(247 90) scale(.98 .95)">a</text>
                <text transform="translate(312 90) scale(.7 .97)">s</text>
              </g>
              <g class="ol">
                <text transform="translate(329 198) rotate(-2) skewX(-4) scale(.82 2.2)">O</text>
                <text transform="translate(391 160) rotate(-18) skewX(-3) scale(.66 1.35)">n</text>
                <text transform="translate(414 133) rotate(-4) skewX(6) scale(1.2 2.2)">l</text>
                <text transform="translate(439 118) rotate(-4) skewX(5) scale(1 1.75)">i</text>
                <text transform="translate(460 105) rotate(-18) skewX(-3) scale(.66 1.35)">n</text>
                <text transform="translate(487 78) rotate(-22) skewX(-3) scale(.74 1.35)">e</text>
              </g>
            </svg>
          </div>
        </div>
      </div>
    </div>
    <aside class="vscroll">
      <span class="split"></span>
      <span class="sb-btn"><svg viewBox="0 0 9 6"><path d="M1 5l3.500-3.500L8 5" fill="none" stroke="#4d6185" stroke-width="2"/></svg></span>
      <span class="sb-thumb v"><span class="grips"></span></span>
      <span class="sb-fill"></span>
      <span class="sb-btn"><svg viewBox="0 0 9 6"><path d="M1 1l3.500 3.500L8 1" fill="none" stroke="#4d6185" stroke-width="2"/></svg></span>
      <span class="browse">
        <svg viewBox="0 0 7 12"><path d="M3.500 0L7 4H0z M3.500 5L7 9H0z" fill="#111" transform="scale(1 .9)"/></svg>
        <svg viewBox="0 0 8 8"><circle cx="4" cy="4" r="3" fill="none" stroke="#111" stroke-width="1.200"/></svg>
        <svg viewBox="0 0 7 12"><path d="M3.500 12L7 8H0z M3.500 7L7 3H0z" fill="#111"/></svg>
      </span>
    </aside>
  </main>

  <div class="hbar">
    <span class="vbtn"><svg><use href="#vn"/></svg></span><span class="vbtn"><svg><use href="#vw"/></svg></span><span class="vbtn act"><svg><use href="#vp"/></svg></span><span class="vbtn"><svg><use href="#vo"/></svg></span><span class="vbtn"><svg><use href="#vr"/></svg></span>
    <span class="sb-btn hz"><svg viewBox="0 0 6 9"><path d="M5 1L1.500 4.500 5 8" fill="none" stroke="#4d6185" stroke-width="2"/></svg></span>
    <span class="sb-thumb h"><span class="grips hg"></span></span>
    <span class="sb-fill"></span>
    <span class="sb-btn hz"><svg viewBox="0 0 6 9"><path d="M1 1l3.500 3.500L1 8" fill="none" stroke="#4d6185" stroke-width="2"/></svg></span>
  </div>

  <div class="drawdock">
    <div class="tb dr">
      <span class="grip"></span>
      <span class="dtxt d1"><u>D</u>esenhar <b class="mini-arrow dark"></b></span>
      <span class="b"><svg><use href="#cursor"/></svg></span><i class="sep"></i>
      <span class="dtxt d2">Aut<u>o</u>Formas <b class="mini-arrow dark"></b></span>
      <span class="b"><svg><use href="#line"/></svg></span><span class="b"><svg><use href="#arrow"/></svg></span><span class="b b-m2"><svg><use href="#rect"/></svg></span><span class="b"><svg><use href="#oval"/></svg></span><span class="b"><svg><use href="#tbox"/></svg></span><span class="b"><svg><use href="#wart"/></svg></span><span class="b"><svg><use href="#diag"/></svg></span><span class="b"><svg><use href="#clip"/></svg></span><span class="b"><svg><use href="#pict"/></svg></span><i class="sep"></i>
      <span class="b"><svg><use href="#filln"/></svg></span><span class="dd"></span><span class="b"><svg><use href="#penb"/></svg></span><span class="dd"></span><span class="b"><svg><use href="#fcol"/></svg></span><span class="dd"></span>
      <span class="b"><svg><use href="#lsty"/></svg></span><span class="b"><svg><use href="#dash"/></svg></span><span class="b"><svg><use href="#arrs"/></svg></span><span class="b"><svg><use href="#shad"/></svg></span><span class="b"><svg><use href="#d3"/></svg></span>
      <span class="chev ch3"></span>
    </div>
  </div>

  <footer class="status">
    <span class="pn p1"><span>Pág&nbsp;&nbsp;1</span><span>Seção&nbsp;&nbsp;1</span><span>1/1</span></span>
    <span class="pn p2 dim"><span>Em</span><span>Lin</span><span>Col</span></span>
    <span class="pn p3 dim">GRA</span><span class="pn p4 dim">ALT</span><span class="pn p5 dim">EST</span><span class="pn p6 dim">SE</span>
    <span class="pn p7">Português (</span>
    <span class="pn p8"><svg viewBox="0 0 18 14"><path d="M1 4c2-1 5-1 7 0v9c-2-1-5-1-7 0zM9 4c2-1 5-1 7 0v9c-2-1-5-1-7 0z" fill="#fff" stroke="#111" stroke-width="1.200"/><path d="M7 7l3 3 7-9" fill="none" stroke="#c11" stroke-width="1.500"/></svg></span>
    <span class="pn p9"></span><span class="pn p10"></span><span class="pn p11"></span>
  </footer>

  <div class="taskbar">
    <span class="start"><svg><use href="#winlogo"/></svg><span>Iniciar</span></span>
    <span class="quick">
      <svg><use href="#qdesk"/></svg><svg><use href="#ie"/></svg><svg><use href="#clock"/></svg><span class="more">»</span>
    </span>
    <span class="task"><svg><use href="#word"/></svg><span>Documento1 - Mic...</span></span>
    <span class="task"><svg><use href="#fox"/></svg><span>Home page - Mozil...</span></span>
    <span class="task"><svg><use href="#fox"/></svg><span>Downloads</span></span>
    <span class="task"><svg><use href="#cam"/></svg><span>revista2</span></span>
    <span class="task"><svg><use href="#word"/></svg><span>templaterevistadq...</span></span>
    <span class="task cur"><svg><use href="#word"/></svg><span>Documento2 - Mic...</span></span>
    <span class="lang">PT</span>
    <span class="tray">
      <svg><use href="#t1"/></svg><svg><use href="#t2"/></svg><svg><use href="#t3"/></svg><svg><use href="#t4"/></svg><svg><use href="#t5"/></svg><svg><use href="#t6"/></svg>
      <span class="clock">14:51</span>
    </span>
  </div>

  <svg class="padlock" viewBox="0 0 36 50">
    <path d="M6 24V14C6 6 11 2 18 2s12 4 12 12v10" fill="none" stroke="#7d6500" stroke-width="6.500"/>
    <path d="M6 24V14C6 6 11 2 18 2s12 4 12 12v10" fill="none" stroke="#f2d000" stroke-width="4"/>
    <rect x=".5" y="22.500" width="34" height="26" fill="url(#gold)" stroke="#7d6500"/>
  </svg>
</div>
</body>
</html>
```

FILE: styles.css
```css
* { box-sizing: border-box; }
html, body { margin: 0; padding: 0; }
body { width: 1280px; height: 1024px; overflow: hidden; font: 10.5px "Noto Sans", "Liberation Sans", sans-serif; color: #000; background: #ece9d8; }
.defs { position: absolute; }
svg { display: block; }
.app { position: relative; width: 1280px; height: 1024px; display: flex; flex-direction: column; overflow: hidden; }

/* title bar */
.title { height: 26px; flex: none; display: flex; align-items: center; padding: 0 3px 0 3px; gap: 2px;
  background: linear-gradient(#0058ee 0, #3593ff 4%, #288eff 6%, #127dff 8%, #036ffc 10%, #0262ee 14%, #0057e5 20%, #0054e3 24%, #0055eb 56%, #005bf5 66%, #026afe 76%, #0062ef 86%, #0052d6 92%, #0040ab 94%, #003092 100%); }
.title-ico { width: 16px; height: 16px; margin-top: -3px; }
.title-text { flex: 1; font: 700 12.5px "Noto Sans", sans-serif; color: #fff; text-shadow: 1px 1px #0f1089; }
.wbtn { width: 21px; height: 21px; border: 1px solid #fff; border-radius: 3px; position: relative; display: flex; align-items: center; justify-content: center; }
.wb-blue { background: radial-gradient(circle at 30% 30%, #4e86f2, #2a5cd6 70%, #1c45b5); }
.wb-red { background: radial-gradient(circle at 30% 30%, #ef8a66, #d9502a 65%, #b83a14); }
.g-min { width: 8px; height: 3px; background: #fff; margin: 8px 5px 0 0; }
.g-max { width: 9px; height: 8px; border: 1px solid #fff; border-top-width: 2px; margin: 3px 2px 0 0; box-shadow: 3px -3px 0 -1px #2a5cd6, 3px -3px 0 0 #fff; }
.g-x { width: 14px; height: 14px; }

/* docked bars */
.dock { height: 130px; flex: none; display: flex; flex-direction: column; align-items: flex-start; gap: 1px; background: linear-gradient(90deg, #a8c3f1, #c3d9f9 45%, #c4daf9); border-left: 2px solid #3a6fd6; border-bottom: 2px solid #7b7a6e; padding-left: 4px; }
.menu { width: 1272px; height: 24px; flex: none; display: flex; align-items: center; margin-left: -4px; padding-left: 5px; }
.mgrip { width: 2px; height: 12px; flex: none; background: repeating-linear-gradient(#27418a 0 2px, transparent 2px 4px); }
.menu-items { display: grid; grid-template-columns: 53px 44px 42px 47px 60px 77px 49px 46px 40px; margin-left: 8px; width: 1097px; flex: none; }
.menu-items span { white-space: nowrap; line-height: 23px; }
.ask { width: 148px; height: 18px; flex: none; background: #fff; display: flex; justify-content: space-between; align-items: stretch; border: 1px solid #fff; border-right-width: 0; color: #6b6b6b; }
.ask-t { padding-left: 2px; line-height: 14px; }
.mclose { width: 9px; height: 9px; margin-left: 6px; flex: none; }

.tb { height: 25px; flex: none; display: flex; align-items: center; border-radius: 4px; padding-bottom: 2px; color: #000;
  background: linear-gradient(#e6f0fe, #d3e4fc 35%, #b6cff6 75%, #94b4ea 95%, #6f93d3); }
.grip { width: 4px; height: 14px; margin-left: 1px; background: repeating-linear-gradient(#27418a 0 2px, transparent 2px 4px) 0 0 / 2px 100% no-repeat; flex: none; margin-right: -1px; }
.g1 { width: 5px; margin-right: 0; margin-left: 1px; background-position: 2px 0; }
.b { width: 23px; height: 23px; flex: none; display: flex; align-items: center; justify-content: center; border: 1px solid transparent; }
.b svg { width: 16px; height: 16px; }
.b21 { width: 21px; }
.b-m3 { margin-left: 3px; }
.b-m2 { margin-left: 2px; }
.on { background: linear-gradient(#ffd6a0, #ffb060); border-color: #000080; }
.dd { width: 11px; height: 23px; flex: none; position: relative; }
.dd::after { content: ""; position: absolute; left: 3px; top: 11px; border: 3px solid transparent; border-top: 3px solid #000; border-bottom: 0; }
.dd.off::after { border-top-color: #a5adbd; }
.sep { width: 6px; height: 19px; flex: none; background: linear-gradient(90deg, transparent 2px, #6a8ccb 2px 3px, #fff 3px 4px, transparent 4px); }
.txt-b { font: 700 17px "Liberation Sans", sans-serif; }
.let-n { font: 700 15px "Liberation Serif", serif; }
.let-i { font: italic 700 15px "Liberation Serif", serif; }
.let-s { font: 700 14px "Liberation Serif", serif; text-decoration: underline; }
.combo { height: 19px; flex: none; background: #fff; display: flex; justify-content: space-between; align-items: stretch; line-height: 18px; padding-left: 2px; }
.cdrop { width: 12px; flex: none; position: relative; background: #c3d8f7; }
.cdrop::after { content: ""; position: absolute; left: 3px; top: 7px; border: 3px solid transparent; border-top: 3px solid #000; border-bottom: 0; }
.tight { letter-spacing: -.15px; }
.c-zoom { width: 61px; margin: 0 1px 0 2px; }
.c-style { width: 113px; margin-left: 1px; white-space: nowrap; }
.c-font { width: 136px; margin: 0 2px 0 3px; }
.c-size { width: 56px; }
.c-line { width: 118px; margin: 0 1px 0 1px; }
.c-wt { width: 44px; margin: 0 0 0 1px; }
.wt { margin-left: 13px; }
.lineprev { width: 80px; height: 1px; background: #000; margin: 8px 0 0 10px; }
.ler { width: 43px; height: 23px; display: flex; align-items: center; gap: 2px; padding-left: 4px; flex: none; }
.ler svg { width: 15px; height: 15px; flex: none; }
.chev { width: 11px; height: 25px; flex: none; margin-top: 2px; border-radius: 0 4px 4px 0; position: relative; background: linear-gradient(#7ba4e8, #3a6cc4 55%, #0d3a94); }
.chev::before { content: ""; position: absolute; left: 3px; top: 16px; width: 5px; height: 1px; background: #fff; }
.chev::after { content: ""; position: absolute; left: 3px; top: 18px; border: 3px solid transparent; border-top: 3px solid #fff; border-bottom: 0; border-left-width: 2.500px; border-right-width: 2.500px; }
.ch2 { margin-left: 3px; }
.ch3 { margin-left: 3px; }
.ch4 { margin-left: 2px; }
.campo { width: 125px; padding-left: 3px; margin-left: 1px; color: #8d95a8; white-space: nowrap; }
.mini-arrow { display: inline-block; border: 3px solid transparent; border-top: 3px solid #8d95a8; border-bottom: 0; vertical-align: 2px; }
.mini-arrow.dark { border-top-color: #000; }
.recbox { width: 35px; height: 19px; flex: none; margin: 0 1px; background: #ece9d8; border: 1px solid #a9a89a; }

/* document region */
.main { height: 773px; flex: none; display: flex; }
.docarea { position: relative; width: 1261px; flex: none; border-left: 2px solid #8d8c80; }
.hruler { width: 1259px; height: 24px; }
.vruler { width: 24px; height: 749px; flex: none; }
.rbg { fill: #d6e6fd; }
.rwhite { fill: #fff; }
.rhi { fill: #9ebdf4; }
.rdots { fill: #000; }
.rticks { stroke: #000; fill: none; }
.rcols { stroke: #777; fill: none; }
.rnum text { font: 10px "Noto Sans", sans-serif; text-anchor: middle; fill: #000; }
.rmark { fill: #ece9d8; stroke: #000; }
.tabbox { position: absolute; left: 3px; top: 3px; width: 17px; height: 17px; background: #fff; border: 1px solid #3f6cc4; display: flex; align-items: center; justify-content: center; }
.tabbox svg { width: 7px; height: 7px; }
.workrow { height: 749px; display: flex; }
.canvas { flex: 1; background: #929ab0; padding: 48px 0 0 57px; }
.page { height: 701px; background: #fff; border: solid #000; border-width: 1px 0 0 1px; overflow: hidden; }
.logo { width: 520px; height: 210px; margin: 311px 0 0 306px; overflow: visible; }
.lg text { font: 900 100px "Inter", "DejaVu Sans", sans-serif; fill: #000080; stroke: #000080; stroke-width: 2.500px; stroke-linejoin: round; }
.lg .lg-at { font-weight: 700; stroke-width: 0; }
.ol text { font: italic 400 75px "Lato", "Open Sans", sans-serif; fill: #000080; stroke: #000080; stroke-width: 1px; stroke-linejoin: round; }

/* scrollbars */
.vscroll { width: 19px; flex: none; display: flex; flex-direction: column; align-items: flex-start; padding-left: 1px; background: #f4f2e9; }
.split { width: 16px; height: 7px; background: #ece9d8; border: 1px solid #8d8c80; flex: none; }
.sb-btn { width: 16px; height: 17px; flex: none; display: flex; align-items: center; justify-content: center; background: linear-gradient(135deg, #dce8fe, #b5cbf8); border: 1px solid #fff; border-radius: 3px; }
.sb-btn svg { width: 9px; height: 6px; }
.sb-btn.hz { width: 15px; height: 16px; }
.sb-btn.hz svg { width: 6px; height: 9px; }
.sb-thumb { display: flex; align-items: center; justify-content: center; flex: none; background: linear-gradient(90deg, #c4d6fb, #bccff9 50%, #aec5f5); border: 1px solid #e6eefc; border-radius: 2px; outline: 1px solid #9eb4e0; outline-offset: -1px; }
.sb-thumb.v { width: 15px; height: 155px; margin-top: 1px; }
.sb-thumb.h { width: 600px; height: 15px; margin-left: 3px; }
.grips { width: 8px; height: 7px; background: repeating-linear-gradient(#8fabee 0 1px, #eef4ff 1px 2px); }
.hg { width: 7px; height: 8px; background: repeating-linear-gradient(90deg, #8fabee 0 1px, #eef4ff 1px 2px); }
.sb-fill { flex: 1; }
.browse { width: 18px; height: 51px; flex: none; display: flex; flex-direction: column; align-items: center; justify-content: space-around; padding: 3px 0; background: #f1efe3; }
.browse svg { width: 7px; height: 10px; }

.hbar { height: 18px; flex: none; display: flex; align-items: center; padding: 0 20px 0 0; background: linear-gradient(#f9f8f2, #f4f2e9); border-left: 2px solid #8d8c80; }
.vbtn { width: 17px; height: 16px; flex: none; display: flex; align-items: center; justify-content: center; border: 1px solid transparent; }
.vbtn svg { width: 14px; height: 14px; }
.vbtn.act { background: linear-gradient(#ffd6a0, #ffb060); border-color: #000080; }

.drawdock { height: 26px; flex: none; background: #c3d9f9; padding-left: 4px; border-left: 2px solid #3a6fd6; }
.tb.dr { height: 25px; padding-bottom: 0; }
.tb.dr .chev { margin-top: 0; }
.dtxt { height: 23px; line-height: 23px; flex: none; white-space: nowrap; padding-left: 2px; }
.d1 { width: 61px; }
.d2 { width: 72px; padding-left: 3px; }

.status { height: 21px; flex: none; display: flex; align-items: center; gap: 5px; background: #ece9d8; border-top: 2px solid #a8a798; border-left: 2px solid #8d8c80; padding-left: 3px; }
.pn { height: 17px; flex: none; display: flex; border: 1px solid #d5d2c0; line-height: 15px; padding-left: 4px; white-space: nowrap; }
.dim { color: #a3a294; }
.p1 { width: 194px; }
.p1 span:nth-child(1) { width: 62px; }
.p1 span:nth-child(2) { width: 88px; }
.p2 { width: 166px; padding-left: 2px; }
.p2 span:nth-child(1) { width: 66px; }
.p2 span:nth-child(2) { width: 46px; }
.p3 { width: 26px; margin-left: 2px; padding-left: 2px; }
.p4 { width: 24px; margin-left: 1px; padding-left: 2px; }
.p5 { width: 25px; margin-left: -1px; padding-left: 2px; }
.p6 { width: 17px; padding-left: 2px; }
.p7 { width: 65px; padding-left: 3px; }
.p8 { width: 43px; padding-left: 9px; }
.p8 svg { width: 18px; height: 14px; }
.p9 { width: 36px; }
.p10 { width: 27px; }
.p11 { width: 29px; }

/* taskbar */
.taskbar { height: 30px; flex: none; display: flex; align-items: center; color: #fff; background: linear-gradient(#1f2f86 0, #3165c4 3%, #3682e5 6%, #4490e6 10%, #3883e5 12%, #2b71e0 15%, #2663da 18%, #235bd6 20%, #2258d5 23%, #2157d6 38%, #245ddb 54%, #2562df 86%, #245fdc 89%, #2158d4 92%, #1d4ec0 95%, #1941a5 98%); }
.start { width: 108px; height: 30px; flex: none; display: flex; align-items: center; gap: 6px; padding-left: 10px; border-radius: 0 10px 10px 0; font: italic 700 16.500px "Noto Sans", sans-serif; text-shadow: 1px 1px 1px #1a4a12; background: linear-gradient(#3a7a3a 0, #5aa85a 8%, #3d9a3d 20%, #3c963c 70%, #2f7d2f 100%); box-shadow: inset -3px 0 4px #1f5f1f; }
.start svg { width: 18px; height: 18px; flex: none; }
.quick { width: 104px; flex: none; display: flex; align-items: center; padding-left: 13px; gap: 8px; }
.quick svg { width: 16px; height: 16px; flex: none; }
.more { font-size: 13px; margin: -8px 0 0 6px; color: #cfe0fb; }
.task { width: 142px; height: 24px; flex: none; margin-right: 2px; padding: 0 0 1px 9px; display: flex; align-items: center; gap: 5px; background: #3c81f3; border-radius: 3px; box-shadow: inset 1px 1px 1px #6da3f7, inset -1px -1px 1px #1f55c4; white-space: nowrap; overflow: hidden; }
.task svg { width: 16px; height: 16px; flex: none; }
.cur { background: #1e52b7; box-shadow: inset 1px 1px 2px #123a8e; }
.lang { width: 16px; height: 16px; margin-left: 8px; line-height: 15px; text-align: center; background: #3c76d8; flex: none; }
.tray { margin-left: 16px; flex: 1; height: 30px; display: flex; align-items: center; gap: 2px; padding-left: 10px; background: linear-gradient(#0f6fc8 0, #19b8f2 8%, #1292e2 20%, #0f8de0 80%, #0d6fc4 100%); border-left: 1px solid #0b3f9a; }
.tray svg { width: 16px; height: 16px; flex: none; }
.clock { margin-left: 4px; }

.padlock { position: absolute; left: 1215px; top: 946px; width: 36px; height: 50px; }
```
